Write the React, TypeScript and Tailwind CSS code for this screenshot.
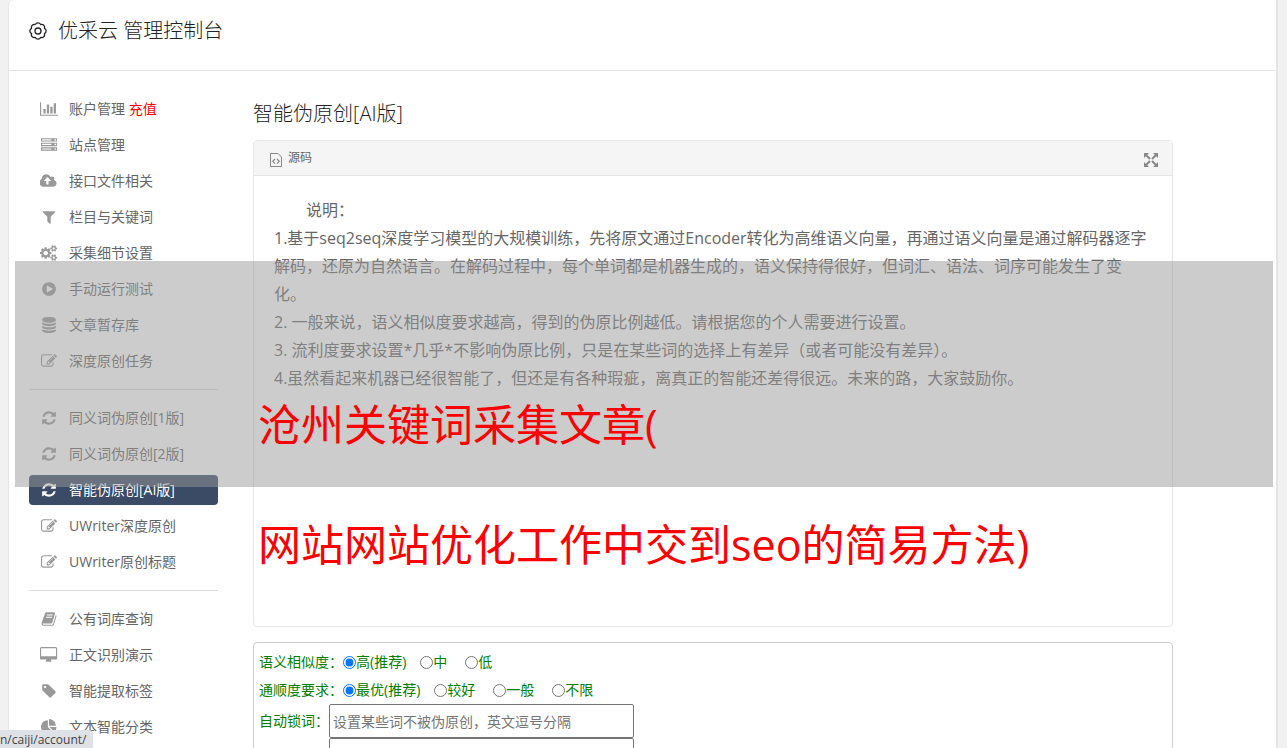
import type { ReactNode } from 'react';

type IconName = 'chart' | 'server' | 'upload' | 'filter' | 'cogs' | 'play' | 'database' | 'edit' | 'refresh' | 'book' | 'desktop' | 'tag' | 'pie';

interface MenuItem {
  icon: IconName;
  label: string;
  extra?: string;
  active?: boolean;
}

const SMALL_COG = 'q0 16-149 31-12 27-30 52 51 113 51 138 0 4-4 7-122 71-124 71-8 0-46-47t-52-68q-20 2-30 2t-30-2q-14 21-52 68t-46 47q-2 0-124-71-4-3-4-7 0-25 51-138-18-25-30-52-149-15-149-31v-140q0-16 149-31 13-29 30-52-51-113-51-138 0-4 4-7 4-2 35-20t59-34 30-16q8 0 46 46.500t52 67.500q20-2 30-2t30 2q51-71 92-112l6-2q4 0 124 70 4 3 4 7 0 25-51 138 17 23 30 52 149 15 149 31z';

const ICONS: Record<IconName, { w: number; d: string }> = {
  chart: { w: 2048, d: 'M640 896v512h-256v-512h256zm384-512v1024h-256v-1024h256zm1024 1152v128h-2048v-1536h128v1408h1920zm-640-896v768h-256v-768h256zm384-384v1152h-256v-1152h256z' },
  server: { w: 1792, d: 'M128 1408h1024v-128h-1024v128zm0-512h1024v-128h-1024v128zm1568 448q0-40-28-68t-68-28-68 28-28 68 28 68 68 28 68-28 28-68zm-1568-960h1024v-128h-1024v128zm1568 448q0-40-28-68t-68-28-68 28-28 68 28 68 68 28 68-28 28-68zm0-512q0-40-28-68t-68-28-68 28-28 68 28 68 68 28 68-28 28-68zm96 832v384h-1792v-384h1792zm0-512v384h-1792v-384h1792zm0-512v384h-1792v-384h1792z' },
  upload: { w: 1920, d: 'M1216 864q0-14-9-23l-352-352q-9-9-23-9t-23 9l-351 351q-10 12-10 24 0 14 9 23t23 9h224v352q0 13 9.5 22.5t22.5 9.5h192q13 0 22.5-9.5t9.5-22.5v-352h224q13 0 22.5-9.5t9.5-22.5zm640 288q0 159-112.5 271.5t-271.5 112.5h-1088q-185 0-316.5-131.5t-131.5-316.5q0-130 70-240t188-165q-2-30-2-43 0-212 150-362t362-150q156 0 285.5 87t188.5 231q71-62 166-62 106 0 181 75t75 181q0 76-41 138 130 31 213.5 135.5t83.5 238.5z' },
  filter: { w: 1792, d: 'M1595 295q17 41-14 70l-493 493v742q0 42-39 59-13 5-25 5-27 0-45-19l-256-256q-19-19-19-45v-486l-493-493q-31-29-14-70 17-39 59-39h1280q42 0 59 39z' },
  cogs: { w: 1920, d: `M896 896q0-106-75-181t-181-75-181 75-75 181 75 181 181 75 181-75 75-181zm768 512q0-52-38-90t-90-38-90 38-38 90q0 53 37.5 90.5t90.5 37.5 90.5-37.5 37.5-90.5zm0-1024q0-52-38-90t-90-38-90 38-38 90q0 53 37.5 90.5t90.5 37.5 90.5-37.5 37.5-90.5zm-384 421v185q0 10-7 19.5t-16 10.5l-155 24q-11 35-32 76 34 48 90 115 7 11 7 20 0 12-7 19-23 30-82.5 89.5t-78.5 59.5q-11 0-21-7l-115-90q-37 19-77 31-11 108-23 155-7 24-30 24h-186q-11 0-20-7.5t-10-17.5l-23-153q-34-10-75-31l-118 89q-7 7-20 7-11 0-21-8-144-133-144-160 0-9 7-19 10-14 41-53t47-61q-23-44-35-82l-152-24q-10-1-17-9.5t-7-19.5v-185q0-10 7-19.5t16-10.5l155-24q11-35 32-76-34-48-90-115-7-11-7-20 0-12 7-20 22-30 82-89t79-59q11 0 21 7l115 90q34-18 77-32 11-108 23-154 7-24 30-24h186q11 0 20 7.5t10 17.5l23 153q34 10 75 31l118-89q8-7 20-7 11 0 21 8 144 133 144 160 0 8-7 19-12 16-42 54t-45 60q23 48 34 82l152 23q10 2 17 10.5t7 19.5zM1920 1338v140${SMALL_COG}M1920 314v140${SMALL_COG}` },
  play: { w: 1792, d: 'M896 128q209 0 385.5 103t279.5 279.5 103 385.5-103 385.5-279.5 279.5-385.5 103-385.5-103-279.5-279.5-103-385.5 103-385.5 279.5-279.5 385.5-103zm384 823q32-18 32-55t-32-55l-544-320q-31-19-64-1-32 19-32 56v640q0 37 32 56 16 8 32 8 17 0 32-9z' },
  database: { w: 1792, d: 'M896 768q237 0 443-43t325-127v170q0 69-103 128t-280 93.5-385 34.5-385-34.5-280-93.5-103-128v-170q119 84 325 127t443 43zm0 768q237 0 443-43t325-127v170q0 69-103 128t-280 93.5-385 34.5-385-34.5-280-93.5-103-128v-170q119 84 325 127t443 43zm0-384q237 0 443-43t325-127v170q0 69-103 128t-280 93.5-385 34.5-385-34.5-280-93.5-103-128v-170q119 84 325 127t443 43zm0-1152q208 0 385 34.5t280 93.5 103 128v128q0 69-103 128t-280 93.5-385 34.5-385-34.5-280-93.5-103-128v-128q0-69 103-128t280-93.5 385-34.5z' },
  edit: { w: 1792, d: 'M888 1184l116-116-152-152-116 116v56h96v96h56zm440-720q-16-16-33 1l-350 350q-17 17-1 33t33-1l350-350q17-17 1-33zm80 594v190q0 119-84.5 203.5t-203.5 84.5h-832q-119 0-203.5-84.5t-84.5-203.5v-832q0-119 84.5-203.5t203.5-84.5h832q63 0 117 25 15 7 18 23 3 17-9 29l-49 49q-14 14-32 8-23-6-45-6h-832q-66 0-113 47t-47 113v832q0 66 47 113t113 47h832q66 0 113-47t47-113v-126q0-13 9-22l64-64q15-15 35-7t20 29zm-96-738l288 288-672 672h-288v-288zm444 132l-92 92-288-288 92-92q28-28 68-28t68 28l152 152q28 28 28 68t-28 68z' },
  refresh: { w: 1792, d: 'M1639 1056q0 5-1 7-64 268-268 434.5t-478 166.5q-146 0-282.5-55t-243.5-157l-129 129q-19 19-45 19t-45-19-19-45v-448q0-26 19-45t45-19h448q26 0 45 19t19 45-19 45l-137 137q71 66 161 102t187 36q134 0 250-65t186-179q11-17 53-117 8-23 30-23h192q13 0 22.5 9.5t9.5 22.5zm25-800v448q0 26-19 45t-45 19h-448q-26 0-45-19t-19-45 19-45l138-138q-148-137-349-137-134 0-250 65t-186 179q-11 17-53 117-8 23-30 23h-199q-13 0-22.5-9.5t-9.5-22.5v-7q65-268 270-434.5t480-166.5q146 0 284 55.5t245 156.5l130-129q19-19 45-19t45 19 19 45z' },
  book: { w: 1792, d: 'M1703 478q40 57 18 129l-275 906q-19 64-76.5 107.5t-122.5 43.5h-923q-77 0-148.5-53.5t-99.5-131.5q-24-67-2-127 0-4 3-27t4-37q1-8-3-21.5t-3-19.5q2-11 8-21t16.5-23.5 16.5-23.5q23-38 45-91.5t30-91.5q3-10 .5-30t-.5-28q3-11 17-28t17-23q21-36 42-92t25-90q1-9-2.5-32t.5-28q4-13 22-30.5t22-22.5q19-26 42.5-84.5t27.5-96.5q1-8-3-25.5t-2-26.5q2-8 9-18t18-23 17-21q8-12 16.5-30.5t15-35 16-36 19.5-32 26.5-23.5 36-11.5 47.5 5.5l-1 3q38-9 51-9h761q74 0 114 56t18 130l-274 906q-36 119-71.5 153.5t-128.5 34.5h-869q-27 0-38 15-11 16-1 43 24 70 144 70h923q29 0 56-15.5t35-41.5l300-987q7-22 5-57 38 15 59 43zm-1064 2q-4 13 2 22.5t20 9.5h608q13 0 25.5-9.5t16.5-22.5l21-64q4-13-2-22.5t-20-9.5h-608q-13 0-25.5 9.5t-16.5 22.5zm-83 256q-4 13 2 22.5t20 9.5h608q13 0 25.5-9.5t16.5-22.5l21-64q4-13-2-22.5t-20-9.5h-608q-13 0-25.5 9.5t-16.5 22.5z' },
  desktop: { w: 1920, d: 'M1792 992v-832q0-13-9.5-22.5t-22.5-9.5h-1600q-13 0-22.5 9.5t-9.5 22.5v832q0 13 9.5 22.5t22.5 9.5h1600q13 0 22.5-9.5t9.5-22.5zm128-832v1088q0 66-47 113t-113 47h-544q0 37 16 77.5t32 71 16 43.5q0 26-19 45t-45 19h-512q-26 0-45-19t-19-45q0-14 16-44t32-70 16-78h-544q-66 0-113-47t-47-113v-1088q0-66 47-113t113-47h1600q66 0 113 47t47 113z' },
  tag: { w: 1792, d: 'M576 448q0-53-37.5-90.5t-90.5-37.5-90.5 37.5-37.5 90.5 37.5 90.5 90.5 37.5 90.5-37.5 37.5-90.5zm1067 576q0 53-37 90l-491 492q-39 37-91 37-53 0-90-37l-715-716q-38-37-64.5-101t-26.5-117v-416q0-52 38-90t90-38h416q53 0 117 26.5t102 64.5l715 714q37 39 37 91z' },
  pie: { w: 1792, d: 'M768 890l546 546q-106 108-247.5 168t-298.5 60q-209 0-385.5-103t-279.5-279.5-103-385.5 103-385.5 279.5-279.5 385.5-103v762zm187 6h773q0 157-60 298.5t-168 247.5zm709-128h-768v-768q209 0 385.5 103t279.5 279.5 103 385.5z' },
};

const MENU: MenuItem[][] = [
  [
    { icon: 'chart', label: '账户管理', extra: '充值' },
    { icon: 'server', label: '站点管理' },
    { icon: 'upload', label: '接口文件相关' },
    { icon: 'filter', label: '栏目与关键词' },
    { icon: 'cogs', label: '采集细节设置' },
    { icon: 'play', label: '手动运行测试' },
    { icon: 'database', label: '文章暂存库' },
    { icon: 'edit', label: '深度原创任务' },
  ],
  [
    { icon: 'refresh', label: '同义词伪原创[1版]' },
    { icon: 'refresh', label: '同义词伪原创[2版]' },
    { icon: 'refresh', label: '智能伪原创[AI版]', active: true },
    { icon: 'edit', label: 'UWriter深度原创' },
    { icon: 'edit', label: 'UWriter原创标题' },
  ],
  [
    { icon: 'book', label: '公有词库查询' },
    { icon: 'desktop', label: '正文识别演示' },
    { icon: 'tag', label: '智能提取标签' },
    { icon: 'pie', label: '文本智能分类' },
  ],
];

const NOTES = [
  '1.基于seq2seq深度学习模型的大规模训练，先将原文通过Encoder转化为高维语义向量，再通过语义向量是通过解码器逐字解码，还原为自然语言。在解码过程中，每个单词都是机器生成的，语义保持得很好，但词汇、语法、词序可能发生了变化。',
  '2. 一般来说，语义相似度要求越高，得到的伪原比例越低。请根据您的个人需要进行设置。',
  '3. 流利度要求设置*几乎*不影响伪原比例，只是在某些词的选择上有差异（或者可能没有差异）。',
  '4.虽然看起来机器已经很智能了，但还是有各种瑕疵，离真正的智能还差得很远。未来的路，大家鼓励你。',
];

function MenuIcon({ name }: { name: IconName }) {
  const { w, d } = ICONS[name];
  return (
    <svg viewBox={`0 0 ${w} 1792`} className="h-4 w-auto" fill="currentColor" aria-hidden="true">
      <path d={d} />
    </svg>
  );
}

// Scalloped gear: eight rounded lobes around a ring
function GearIcon() {
  const pts = Array.from({ length: 8 }, (_, i) => {
    const a = ((i * 45 - 22.5) * Math.PI) / 180;
    return [9 + 7 * Math.sin(a), 9 - 7 * Math.cos(a)].map(n => n.toFixed(2)).join(' ');
  });
  const d = `M${pts[0]}` + pts.slice(1).concat(pts[0]).map(p => `A3 3 0 0 1 ${p}`).join('');
  return (
    <svg viewBox="0 0 18 18" className="size-[18px]" fill="none" stroke="currentColor" strokeWidth="1.3" strokeLinejoin="round" aria-hidden="true">
      <path d={d} />
      <circle cx="9" cy="9" r="3" />
    </svg>
  );
}

function RadioRow({ title, name, options }: { title: string; name: string; options: string[] }) {
  return (
    <fieldset className="flex h-7 items-center">
      <legend className="float-left">{title}</legend>
      {options.map((o, i) => (
        <label key={o} className={`flex items-center ${i === 0 ? 'mr-[14px]' : 'mr-[18px]'}`}>
          <input type="radio" name={name} defaultChecked={i === 0} className="size-[13px]" />
          {o}
        </label>
      ))}
    </fieldset>
  );
}

function TextRow({ label, id, placeholder }: { label: ReactNode; id: string; placeholder?: string }) {
  return (
    <div className="flex items-center">
      <label htmlFor={id} className="w-[70px] whitespace-nowrap">{label}</label>
      <input
        id={id}
        type="text"
        placeholder={placeholder}
        className="h-[34px] w-[305px] rounded-xs border border-[#767676] bg-white px-[3px] text-sm placeholder:text-[#757575]"
      />
    </div>
  );
}

export default function App() {
  return (
    <div className="relative h-screen overflow-hidden bg-[#f1f1f1] pl-2 pr-[9px] font-['Open_Sans','Noto_Sans_CJK_SC',sans-serif] text-[#666]">
      <div className="min-h-full rounded-tl-md border-l border-r-2 border-[#e5e5e5] bg-white">
        <header className="flex h-[71px] items-center gap-[11px] border-b border-[#e5e5e5] px-5 pb-2 text-[#222]">
          <GearIcon />
          <h1 className="text-xl font-light">优采云 管理控制台</h1>
        </header>

        <div className="flex pl-5 pr-[103px] pt-[23px]">
          {/* Sidebar */}
          <nav className="mr-[35px] w-[189px] shrink-0 text-sm">
            {MENU.map((group, g) => (
              <ul key={g} className={`flex flex-col gap-[6px] ${g > 0 ? 'mt-[13px] border-t border-[#ddd] pt-[13px]' : ''}`}>
                {group.map(item => (
                  <li key={item.label}>
                    <a
                      href="#"
                      className={`flex h-[30px] items-center gap-[10px] rounded px-[10px] ${
                        item.active ? 'bg-[#3b4a65] text-white' : ''
                      }`}
                    >
                      <span className={`flex w-5 justify-center ${item.active ? 'text-white' : 'text-[#999]'}`}>
                        <MenuIcon name={item.icon} />
                      </span>
                      <span>
                        {item.label}
                        {item.extra && <span className="text-[#f00]"> {item.extra}</span>}
                      </span>
                    </a>
                  </li>
                ))}
              </ul>
            ))}
          </nav>

          {/* Main column */}
          <main className="min-w-0 flex-1 pt-1">
            <h2 className="text-xl leading-8 font-light text-[#222]">智能伪原创[AI版]</h2>

            <section className="mt-[10px] min-h-[487px] rounded border border-[#e5e5e5]">
              <div className="flex h-[35px] items-center justify-between border-b border-[#e5e5e5] bg-[#f5f5f5] pl-4 pr-[14px]">
                <button type="button" className="flex items-center gap-[6px] text-xs">
                  <svg viewBox="0 0 12 14" className="mt-[3px] h-[14px] w-3" fill="none" stroke="#888" aria-hidden="true">
                    <path d="M.5.5h7.5l3.5 3.5v9.5h-11z" />
                    <path d="M5 6L2.8 8.3 5 10.6M7 6l2.2 2.3L7 10.6" strokeWidth="1.2" />
                  </svg>
                  源码
                </button>
                <button type="button" aria-label="全屏" className="mt-[3px]">
                  <svg viewBox="0 0 14 14" className="size-[14px]" fill="#888" stroke="#888">
                    <path d="M0 0h5L0 5zM14 0v5L9 0zM0 14V9l5 5zM14 14H9l5-5z" stroke="none" />
                    <path d="M2 2l4 4M12 2L8 6M2 12l4-4M12 12L8 8" strokeWidth="2" />
                  </svg>
                </button>
              </div>
              <div className="px-5 pt-5 leading-7">
                <p className="indent-8">说明：</p>
                {NOTES.map(n => (
                  <p key={n}>{n}</p>
                ))}
              </div>
            </section>

            <form className="mt-[15px] rounded border border-[#ccc] px-[5px] pt-[5px] text-sm text-[#008000]">
              <RadioRow title="语义相似度：" name="similarity" options={['高(推荐)', '中', '低']} />
              <RadioRow title="通顺度要求：" name="fluency" options={['最优(推荐)', '较好', '一般', '不限']} />
              <TextRow label="自动锁词：" id="lock-words" placeholder="设置某些词不被伪原创，英文逗号分隔" />
              <TextRow label="" id="custom-words" />
            </form>
          </main>
        </div>
      </div>

      {/* Caption band over the page */}
      <div className="pointer-events-none absolute left-[15px] right-[14px] top-[261px] h-[226px] bg-[#999]/50 pl-[243px] pt-[104px] text-[43px] leading-[120px] text-[#f00]">
        <p>沧州关键词采集文章(</p>
        <p>网站网站优化工作中交到seo的简易方法)</p>
      </div>

      {/* Link status bubble */}
      <div className="absolute bottom-0 left-0 flex h-[18px] items-end rounded-tr bg-[#dee1e6] pr-[7px] text-xs leading-4 text-[#444]">
        <span>n/caiji/account/</span>
      </div>
    </div>
  );
}
